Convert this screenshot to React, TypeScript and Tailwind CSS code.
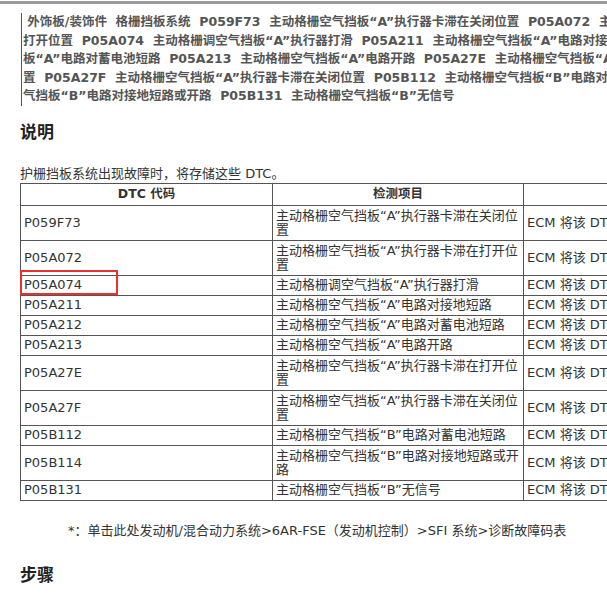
export default function App() {
  const rows: [string, string[]][] = [
    ["P059F73", ["主动格栅空气挡板“A”执行器卡滞在关闭位", "置"]],
    ["P05A072", ["主动格栅空气挡板“A”执行器卡滞在打开位", "置"]],
    ["P05A074", ["主动格栅调空气挡板“A”执行器打滑"]],
    ["P05A211", ["主动格栅空气挡板“A”电路对接地短路"]],
    ["P05A212", ["主动格栅空气挡板“A”电路对蓄电池短路"]],
    ["P05A213", ["主动格栅空气挡板“A”电路开路"]],
    ["P05A27E", ["主动格栅空气挡板“A”执行器卡滞在打开位", "置"]],
    ["P05A27F", ["主动格栅空气挡板“A”执行器卡滞在关闭位", "置"]],
    ["P05B112", ["主动格栅空气挡板“B”电路对蓄电池短路"]],
    ["P05B114", ["主动格栅空气挡板“B”电路对接地短路或开", "路"]],
    ["P05B131", ["主动格栅空气挡板“B”无信号"]],
  ];
  const lines = [
    "\u00a0外饰板/装饰件\u00a0\u00a0格栅挡板系统\u00a0\u00a0P059F73\u00a0\u00a0主动格栅空气挡板“A”执行器卡滞在关闭位置\u00a0\u00a0P05A072\u00a0\u00a0主动格栅空气挡板",
    "打开位置\u00a0\u00a0P05A074\u00a0\u00a0主动格栅调空气挡板“A”执行器打滑\u00a0\u00a0P05A211\u00a0\u00a0主动格栅空气挡板“A”电路对接地短路",
    "板“A”电路对蓄电池短路\u00a0\u00a0P05A213\u00a0\u00a0主动格栅空气挡板“A”电路开路\u00a0\u00a0P05A27E\u00a0\u00a0主动格栅空气挡板“A”执行器",
    "置\u00a0\u00a0P05A27F\u00a0\u00a0主动格栅空气挡板“A”执行器卡滞在关闭位置\u00a0\u00a0P05B112\u00a0\u00a0主动格栅空气挡板“B”电路对蓄电池",
    "气挡板“B”电路对接地短路或开路\u00a0\u00a0P05B131\u00a0\u00a0主动格栅空气挡板“B”无信号",
  ];
  return (
    <div className="w-[607px] h-[605px] overflow-hidden bg-white text-[#333] relative" style={{ fontFamily: '"DejaVu Sans","Noto Sans CJK SC",sans-serif' }}>
      <div className="h-[3px] bg-[#9a9a9a] mt-[1px]" />
      <div className="ml-[21px] mt-[9px] border-l border-[#555] pl-[1px] w-[700px]">
        {lines.map((l, i) => (
          <div key={i} className="h-[18.5px] leading-[18.5px] text-[12.5px] font-bold text-[#555] whitespace-nowrap">{l}</div>
        ))}
      </div>
      <div className="ml-[20px] mt-[14px] text-[17px] font-bold text-[#222]">说明</div>
      <div className="ml-[20px] mt-[20px] text-[13px] leading-[18px]">护栅挡板系统出现故障时，将存储这些 DTC。</div>
      <table className="ml-[20px] border-collapse text-[13px] leading-[14.5px] w-[700px] table-fixed">
        <colgroup>
          <col className="w-[252px]" />
          <col className="w-[251px]" />
          <col className="w-[197px]" />
        </colgroup>
        <thead>
          <tr className="h-[22px]">
            <th className="border border-[#555] font-bold text-[12.5px]">DTC 代码</th>
            <th className="border border-[#555] font-bold text-[12.5px]">检测项目</th>
            <th className="border border-[#555]"></th>
          </tr>
        </thead>
        <tbody>
          {rows.map(([c, d]) => (
            <tr key={c} className={d.length > 1 ? "h-[35px]" : "h-[20px]"}>
              <td className="border border-[#555] px-[3px] py-0 align-middle">{c}</td>
              <td className="border border-[#555] px-[3px] py-0 align-middle">{d.map((x, i) => <div key={i}>{x}</div>)}</td>
              <td className="border border-[#555] px-[3px] py-0 align-middle whitespace-nowrap">ECM 将该 DTC 存储</td>
            </tr>
          ))}
        </tbody>
      </table>
      <div className="ml-[68px] mt-[20px] text-[13px]">*：单击此处发动机/混合动力系统&gt;6AR-FSE（发动机控制）&gt;SFI 系统&gt;诊断故障码表</div>
      <div className="ml-[20px] mt-[22px] text-[17px] font-bold text-[#222]">步骤</div>
      <div className="absolute left-[20px] top-[270px] w-[98px] h-[25px] border-2 border-[#e8302e]" />
    </div>
  );
}
